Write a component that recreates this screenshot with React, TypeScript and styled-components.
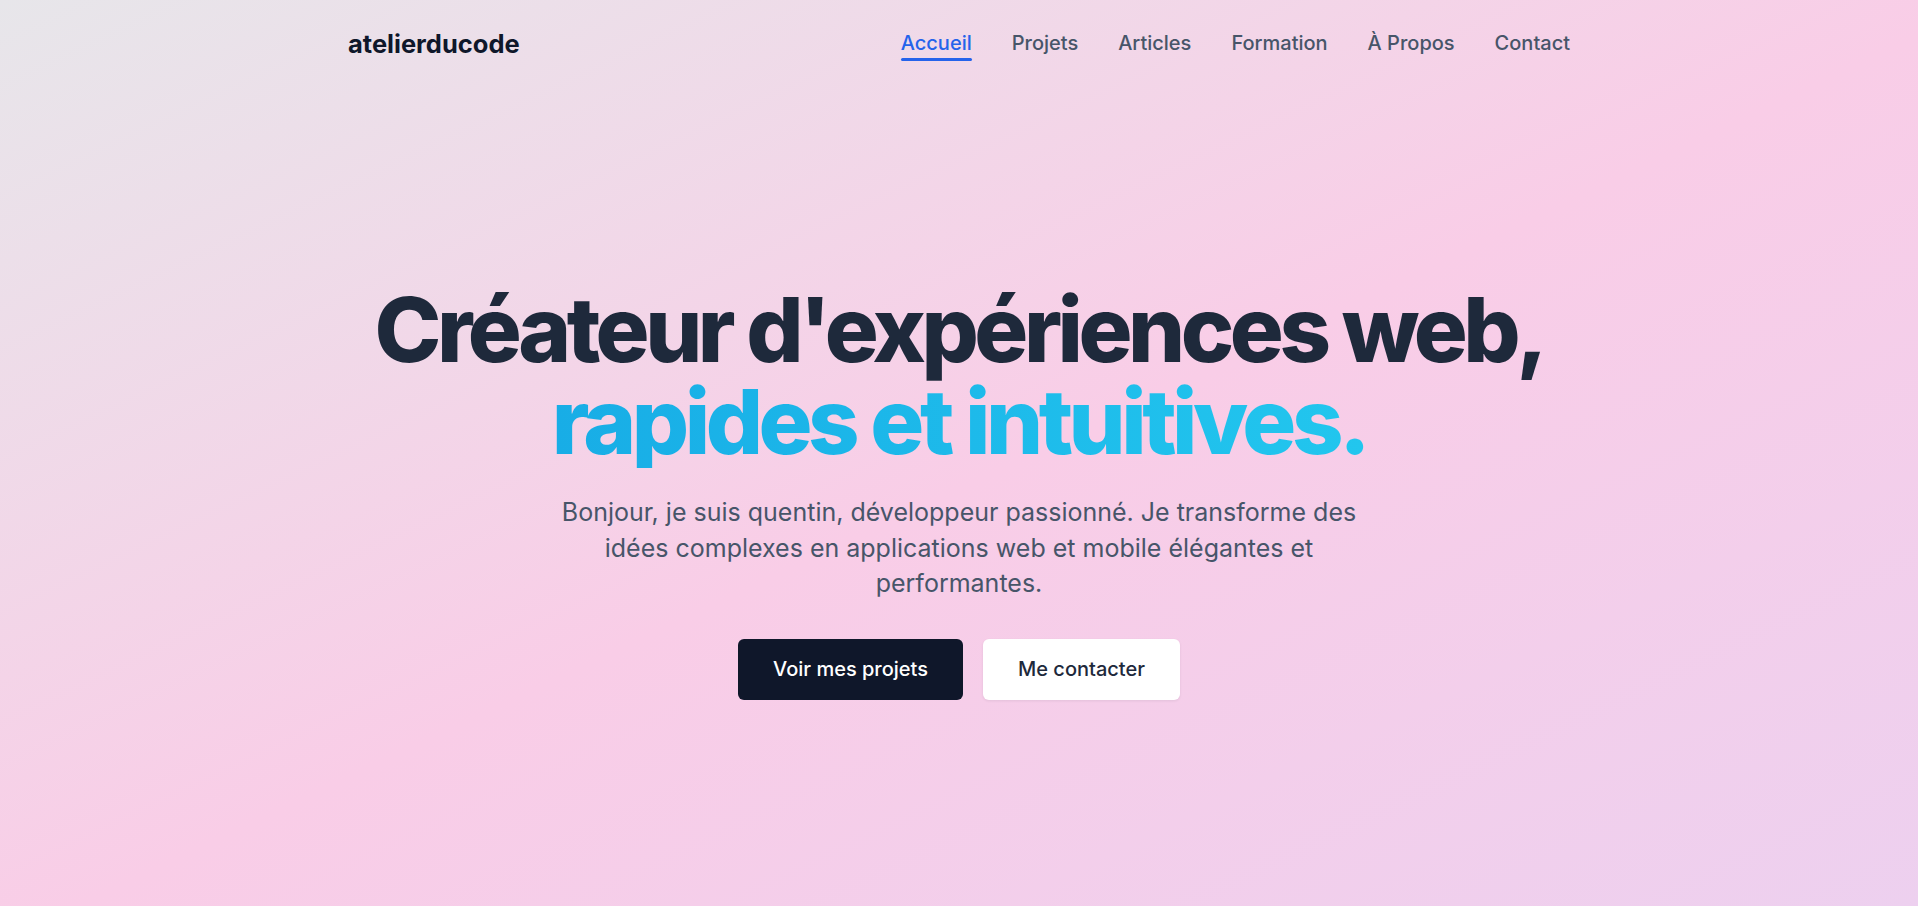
import React from "react";
import styled, { createGlobalStyle } from "styled-components";

const GlobalStyle = createGlobalStyle`
  html, body {
    margin: 0;
    padding: 0;
  }
  body {
    font-family: Inter, "Noto Sans", "Liberation Sans", sans-serif;
    -webkit-font-smoothing: antialiased;
  }
  * { box-sizing: border-box; }
`;

const Page = styled.div`
  min-height: 100vh;
  background: linear-gradient(to bottom right, #e7e6ea 0%, #f9cde7 52%, #edd0ef 100%);
  overflow: hidden;
`;

const Header = styled.header`
  max-width: 1222px;
  margin: 0 auto;
  height: 86px;
  display: flex;
  align-items: center;
  justify-content: space-between;
`;

const Logo = styled.a`
  font-size: 25.5px;
  font-weight: 700;
  color: #0f172a;
  letter-spacing: 0;
  text-decoration: none;
`;

const Nav = styled.nav`
  display: flex;
  align-items: center;
  gap: 40px;
`;

const NavLink = styled.a<{ $active?: boolean }>`
  position: relative;
  font-size: 20px;
  font-weight: 500;
  color: ${(p) => (p.$active ? "#2563eb" : "#475569")};
  text-decoration: none;
  padding: 4px 0;

  &::after {
    content: "";
    display: ${(p) => (p.$active ? "block" : "none")};
    position: absolute;
    left: 0;
    right: 0;
    bottom: -2px;
    height: 3px;
    border-radius: 2px;
    background: #2563eb;
  }
`;

const Hero = styled.section`
  display: flex;
  flex-direction: column;
  align-items: center;
  text-align: center;
  padding-top: 198px;
`;

const Title = styled.h1`
  margin: 0;
  font-size: 90px;
  line-height: 92px;
  font-weight: 800;
  letter-spacing: -0.05em;
  color: #1e293b;
`;

const Accent = styled.span`
  display: inline-block;
  background: linear-gradient(to right, #18ade6, #22c6ee);
  -webkit-background-clip: text;
  background-clip: text;
  color: transparent;
`;

const Lead = styled.p`
  margin: 27px 0 0;
  max-width: 840px;
  font-size: 25px;
  line-height: 35.5px;
  color: #475569;
`;

const Actions = styled.div`
  margin-top: 37px;
  display: flex;
  gap: 20px;
`;

const Button = styled.a<{ $primary?: boolean }>`
  height: 61px;
  padding: 0 35px;
  display: inline-flex;
  align-items: center;
  justify-content: center;
  border-radius: 6px;
  font-size: 20px;
  font-weight: 500;
  text-decoration: none;
  background: ${(p) => (p.$primary ? "#0f172a" : "#ffffff")};
  color: ${(p) => (p.$primary ? "#ffffff" : "#1e293b")};
  box-shadow: ${(p) => (p.$primary ? "none" : "0 1px 3px rgba(15, 23, 42, 0.08)")};
`;

const links = ["Accueil", "Projets", "Articles", "Formation", "À Propos", "Contact"];

export default function App() {
  return (
    <>
      <GlobalStyle />
      <Page>
        <Header>
          <Logo href="#">atelierducode</Logo>
          <Nav>
            {links.map((l, i) => (
              <NavLink key={l} href="#" $active={i === 0}>
                {l}
              </NavLink>
            ))}
          </Nav>
        </Header>
        <Hero>
          <Title>
            Créateur d'expériences web,
            <br />
            <Accent>rapides et intuitives.</Accent>
          </Title>
          <Lead>
            Bonjour, je suis quentin, développeur passionné. Je transforme des idées complexes en
            applications web et mobile élégantes et performantes.
          </Lead>
          <Actions>
            <Button href="#" $primary>
              Voir mes projets
            </Button>
            <Button href="#">Me contacter</Button>
          </Actions>
        </Hero>
      </Page>
    </>
  );
}
